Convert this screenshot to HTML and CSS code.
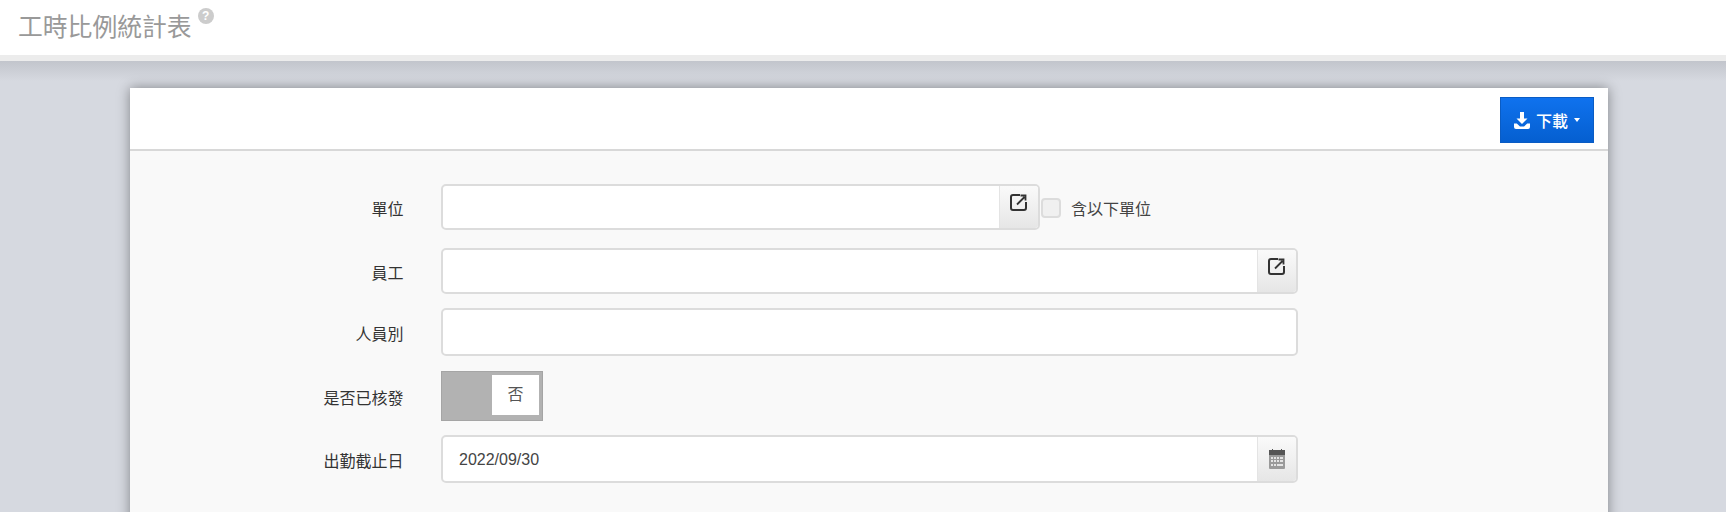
FILE: index.html
```html
<!DOCTYPE html>
<html>
<head>
    <title>工時比例統計表</title>
    <link rel="stylesheet" href="styles.css">
</head>
<body>
    <header class="page-header">
        <h1>工時比例統計表</h1>
        <span class="help-icon">?</span>
    </header>
    <main class="content">
        <section class="card">
            <div class="card-head">
                <button type="button" class="btn-download">
                    <svg class="icon-download" viewBox="0 0 16 17"><path d="M6 0h4v6.500h3.500L8 12 2.500 6.500H6z"/><path d="M0 11.500h2.800L6 14.500h4l3.200-3H16V15a2 2 0 0 1-2 2H2a2 2 0 0 1-2-2z"/></svg>
                    下載
                    <span class="caret"></span>
                </button>
            </div>
            <form class="card-body">
                <div class="form-row row-first">
                    <label>單位</label>
                    <div class="input-group group-short">
                        <input type="text">
                        <span class="addon">
                            <svg class="icon-open" viewBox="0 0 18 18"><path d="M10 2H3a2 2 0 0 0-2 2v11a2 2 0 0 0 2 2h11a2 2 0 0 0 2-2V9"/><path d="M7 11.500L14.500 4M10.500 2.500h5v5" stroke-width="1.800"/></svg>
                        </span>
                    </div>
                    <span class="check-box"></span>
                    <span class="check-label">含以下單位</span>
                </div>
                <div class="form-row">
                    <label>員工</label>
                    <div class="input-group">
                        <input type="text">
                        <span class="addon">
                            <svg class="icon-open" viewBox="0 0 18 18"><path d="M10 2H3a2 2 0 0 0-2 2v11a2 2 0 0 0 2 2h11a2 2 0 0 0 2-2V9"/><path d="M7 11.500L14.500 4M10.500 2.500h5v5" stroke-width="1.800"/></svg>
                        </span>
                    </div>
                </div>
                <div class="form-row row-tall">
                    <label>人員別</label>
                    <div class="input-group">
                        <input type="text">
                    </div>
                </div>
                <div class="form-row row-toggle">
                    <label>是否已核發</label>
                    <div class="toggle">
                        <span class="toggle-knob">否</span>
                    </div>
                </div>
                <div class="form-row row-tall">
                    <label>出勤截止日</label>
                    <div class="input-group">
                        <input type="text" value="2022/09/30">
                        <span class="addon">
                            <svg class="icon-cal" viewBox="0 0 16 20"><rect y="1" width="16" height="19" rx="1" fill="#9a9a9a"/><rect width="16" height="5" y="1" fill="#555"/><path d="M3 0h1v3H3zM12 0h1v3h-1z" fill="#555"/><path d="M2 8h2v2H2zM5 8h2v2H5zM8 8h2v2H8zM11 8h3v2h-3zM2 11h2v2H2zM5 11h2v2H5zM8 11h2v2H8zM11 11h3v2h-3zM2 15h2v2H2zM5 15h2v2H5zM8 15h6v2H8z" fill="#e4e4e4"/></svg>
                        </span>
                    </div>
                </div>
            </form>
        </section>
    </main>
</body>
</html>
```

FILE: styles.css
```css
html, body {
    height: 100%;
}
body {
    margin: 0;
    height: 512px;
    overflow: hidden;
    background-color: #d6d9e0;
    font-family: "Liberation Sans", "Noto Sans CJK TC", sans-serif;
    font-size: 16px;
    color: #333;
}
.page-header {
    height: 55px;
    display: flex;
    align-items: flex-start;
    padding-left: 18px;
    background-color: #fff;
    border-bottom: 6px solid #ececec;
}
.page-header h1 {
    margin: 12px 0 0;
    font-size: 24.8px;
    line-height: 32px;
    font-weight: 400;
    color: #999;
}
.help-icon {
    width: 16px;
    height: 16px;
    margin: 8px 0 0 6px;
    border-radius: 50%;
    background-color: #ccc;
    color: #fff;
    font-size: 12px;
    font-weight: bold;
    line-height: 16px;
    text-align: center;
}
.content {
    height: 451px;
    box-sizing: border-box;
    padding: 27px 118px 0 130px;
    background: linear-gradient(#c2c5cc, #d6d9e0 20px);
}
.card {
    height: 440px;
    background-color: #f9f9f9;
    box-shadow: 0 0 12px rgba(0, 0, 0, 0.4);
}
.card-head {
    height: 52px;
    display: flex;
    justify-content: flex-end;
    align-items: flex-start;
    padding: 9px 14px 0 0;
    background-color: #fff;
    border-bottom: 2px solid #d8d8d8;
}
.btn-download {
    width: 94px;
    height: 46px;
    display: flex;
    align-items: center;
    justify-content: center;
    padding: 0;
    border: 1px solid #0a5cc4;
    background: linear-gradient(#0f72ee, #055fd0);
    color: #fff;
    font-family: inherit;
    font-size: 16px;
    font-weight: 500;
}
.icon-download {
    width: 16px;
    height: 17px;
    margin-right: 6px;
    fill: #fff;
}
.caret {
    margin-left: 6px;
    border-top: 4px solid #fff;
    border-left: 3px solid transparent;
    border-right: 3px solid transparent;
}
.card-body {
    display: flex;
    flex-direction: column;
    gap: 14px;
    padding-top: 33px;
}
.form-row {
    display: flex;
    align-items: center;
    height: 46px;
}
.row-first {
    margin-bottom: 4px;
}
.row-tall {
    height: 48px;
}
.row-toggle {
    height: 50px;
    margin-top: 1px;
}
.form-row label {
    width: 273.5px;
    padding-top: 2px;
    text-align: right;
    margin-right: 37.5px;
}
.input-group {
    width: 857px;
    height: 100%;
    display: flex;
    box-sizing: border-box;
    border: 2px solid #dcdcdc;
    border-radius: 5px;
    background-color: #fff;
    overflow: hidden;
}
.group-short {
    width: 599px;
}
.input-group input {
    flex: 1;
    min-width: 0;
    border: none;
    outline: none;
    padding: 1px 16px 0;
    font-family: inherit;
    font-size: 16px;
    color: #444;
    background: transparent;
}
.addon {
    width: 38px;
    display: flex;
    align-items: center;
    justify-content: center;
    border-left: 1px solid #e4e4e4;
    background: linear-gradient(#fafafa, #e6e6e6);
}
.icon-open {
    width: 18px;
    height: 18px;
    margin-top: -10px;
    fill: none;
    stroke: #333;
    stroke-width: 2;
}
.icon-cal {
    width: 16px;
    height: 20px;
}
.check-box {
    width: 16px;
    height: 16px;
    margin: 2px 10px 0 1px;
    border: 2px solid #dcdcdc;
    border-radius: 4px;
    background-color: #f0f0f0;
}
.check-label {
    margin-top: 2px;
    color: #444;
}
.toggle {
    width: 102px;
    height: 50px;
    display: flex;
    justify-content: flex-end;
    box-sizing: border-box;
    padding: 3px 3px 5px;
    background-color: #b2b2b2;
    border: 1px solid #a5a5a5;
}
.toggle-knob {
    width: 47px;
    background-color: #fff;
    text-align: center;
    line-height: 40px;
    color: #555;
}
```
